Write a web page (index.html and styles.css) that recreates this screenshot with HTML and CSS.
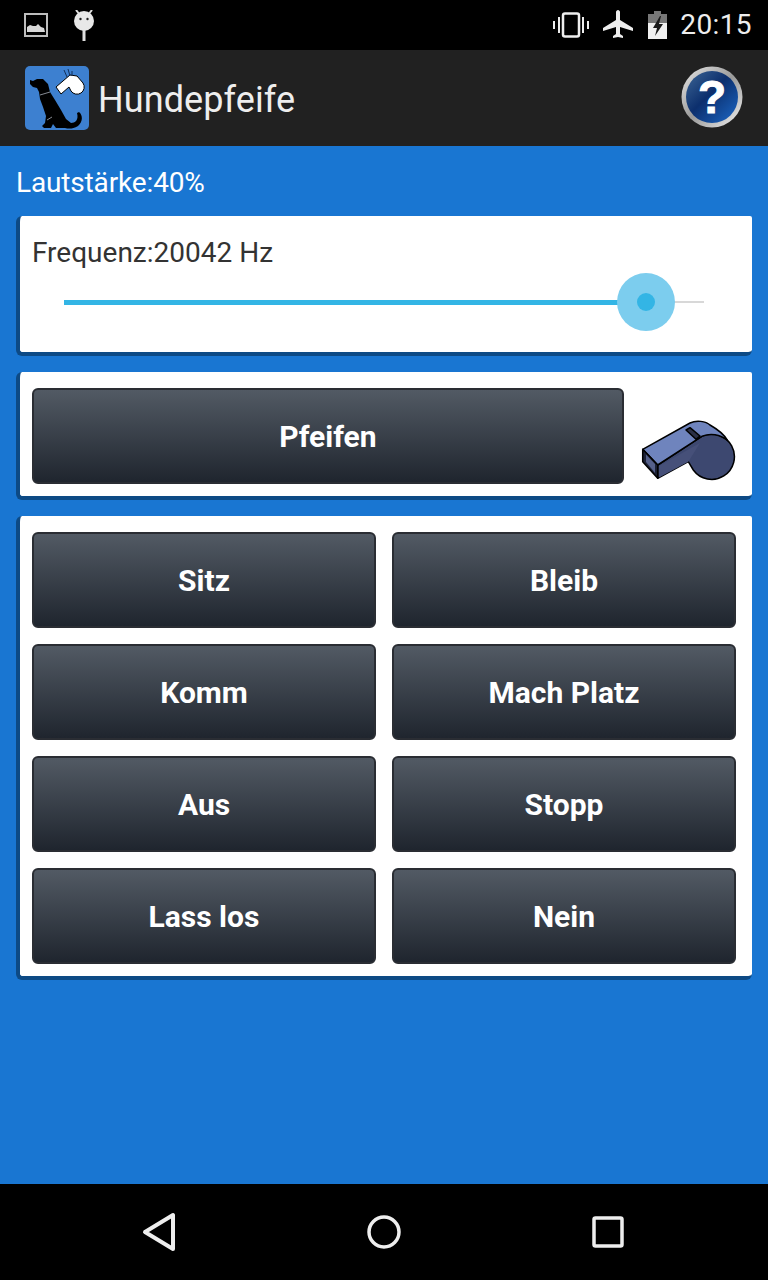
FILE: index.html
```html
<!DOCTYPE html>
<html>
	<head>
		<meta charset="UTF-8">
		<title>Hundepfeife</title>
		<link rel="stylesheet" href="styles.css">
	</head>
	<body>
		<div class="status">
			<div class="status-left">
				<svg width="24" height="24" viewBox="0 0 24 24">
					<rect x="1" y="1" width="22" height="22" fill="none" stroke="#bdbdbd" stroke-width="2"/>
					<path d="M3 19v-5l3-2 3 1 3 0 2-2 3 3 3 1 1 4z" fill="#d8d8d8"/>
				</svg>
				<svg width="22" height="32" viewBox="0 0 22 32">
					<path d="M3 0l4 5M19 0l-4 5" stroke="#e0e0e0" stroke-width="2"/>
					<circle cx="11" cy="11" r="10" fill="#e8e8e8"/>
					<circle cx="7.500" cy="9" r="1.200" fill="#222"/>
					<circle cx="14.500" cy="9" r="1.200" fill="#222"/>
					<rect x="9.500" y="20" width="3" height="11" fill="#e0e0e0"/>
				</svg>
			</div>
			<div class="status-right">
				<svg width="36" height="26" viewBox="0 0 36 26">
					<rect x="10" y="1.500" width="16" height="23" rx="2" fill="none" stroke="#eee" stroke-width="2.500"/>
					<path d="M1 9v8M6 5v16M30 5v16M35 9v8" stroke="#eee" stroke-width="2"/>
				</svg>
				<svg width="30" height="30" viewBox="0 0 30 30">
					<path d="M13 2c0-1 1-2 2-2s2 1 2 2v8l13 8v3l-13-4v7l3 2v2l-5-1-5 1v-2l3-2v-7l-13 4v-3l13-8z" fill="#eee"/>
				</svg>
				<svg width="19" height="28" viewBox="0 0 19 28">
					<path d="M6 0h7v3h6v25h-19v-25h6z" fill="#f0f0f0"/>
					<path d="M6 0h7v3h6v9h-19v-9h6z" fill="#777"/>
					<path d="M12 5l-7 12h4l-2 8 8-12h-4l2-8z" fill="#1a1a1a"/>
				</svg>
				<span class="clock">20:15</span>
			</div>
		</div>

		<div class="actionbar">
			<svg class="applogo" width="64" height="64" viewBox="0 0 64 64">
				<rect width="64" height="64" rx="5" fill="#3d80d0"/>
				<!-- dog -->
				<path d="M5 14L8 15L12 13L18 13L23 18L25 26L30 34L36 44L41 53L46 57C50 57 54 54 52 47L54 46C58 49 58 56 53 60C48 63 44 63 40 62L31 62L28 58L26 62L19 62L17 60L20 57L21 50L18 41L15 33L14 26L12 22L8 21L5 18Z" fill="#000"/>
				<path d="M15 29L25 26M22 54L27 51" stroke="#dfe8f5" stroke-width="0.600"/>
				<!-- whistle -->
				<path d="M31 21L45 9L52 10L58 17A6.500 6.500 0 1 1 46 25L44 21L36 28Z" fill="#fff" stroke="#000" stroke-width="1"/>
				<path d="M39 4L42 11M43 3L45 10M47 5V10" stroke="#12305a" stroke-width="1"/>
			</svg>
			<span class="apptitle">Hundepfeife</span>
			<svg class="help" width="62" height="62" viewBox="0 0 62 62">
				<defs>
					<linearGradient id="ring" x1="0" y1="0" x2="1" y2="1">
						<stop offset="0" stop-color="#e8e8e8"/>
						<stop offset="0.5" stop-color="#9a9a9a"/>
						<stop offset="1" stop-color="#f4f4f4"/>
					</linearGradient>
					<linearGradient id="disc" x1="0" y1="0" x2="1" y2="1">
						<stop offset="0" stop-color="#3f6796"/>
						<stop offset="0.45" stop-color="#0c2f6d"/>
						<stop offset="1" stop-color="#1c68c8"/>
					</linearGradient>
				</defs>
				<circle cx="31" cy="31" r="30.500" fill="url(#ring)"/>
				<circle cx="31" cy="31" r="26" fill="url(#disc)"/>
				<text class="help-mark" x="31" y="47">?</text>
			</svg>
		</div>

		<div class="main">
			<div class="volume">Lautstärke:40%</div>

			<div class="card freq">
				<div class="freq-label">Frequenz:20042 Hz</div>
				<div class="slider">
					<div class="slider-fill" style="width:91%">
						<span class="thumb"></span>
					</div>
				</div>
			</div>

			<div class="card whistle">
				<a class="btn btn-main">Pfeifen</a>
				<svg class="whistle-pic" width="96" height="66" viewBox="0 0 96 66" stroke="#000" stroke-width="1.500" stroke-linejoin="round">
					<path d="M17.700 49L62.200 20.100A22.700 22.700 0 1 1 53.300 54L48.300 45.700L17.700 62.300Z" fill="#3d4870"/>
					<path d="M19 50L60 27L48.300 45.700L19 61.500Z" fill="#465079" stroke="none"/>
					<path d="M2.700 33.300L50 7C56 4 66 5 70 9C77 13 84 18 87.500 24.400C80 18 70 17 62.200 20.100L17.700 49Z" fill="#6f84bd"/>
					<path d="M2.700 33.300L17.700 49V62.300L2.700 45.700Z" fill="#1d2236"/>
					<path d="M6 38.500L15 48V57L6 46Z" fill="#55608a" stroke="none"/>
					<path d="M46 14L50 11.700L60 20L56 23.300Z" fill="#2a2f45"/>
				</svg>
			</div>

			<div class="card commands">
				<a class="btn">Sitz</a>
				<a class="btn">Bleib</a>
				<a class="btn">Komm</a>
				<a class="btn">Mach Platz</a>
				<a class="btn">Aus</a>
				<a class="btn">Stopp</a>
				<a class="btn">Lass los</a>
				<a class="btn">Nein</a>
			</div>
		</div>

		<div class="navbar">
			<svg width="36" height="40" viewBox="0 0 36 40"><path d="M31 3v34l-28-17z" fill="none" stroke="#eee" stroke-width="4" stroke-linejoin="round"/></svg>
			<svg width="36" height="36" viewBox="0 0 36 36"><circle cx="18" cy="18" r="15" fill="none" stroke="#eee" stroke-width="3.500"/></svg>
			<svg width="32" height="32" viewBox="0 0 32 32"><rect x="2" y="2" width="28" height="28" rx="1.500" fill="none" stroke="#eee" stroke-width="3.500"/></svg>
		</div>
	</body>
</html>
```

FILE: styles.css
```css
*{margin:0;padding:0;box-sizing:border-box;}
body{width:768px;height:1280px;display:flex;flex-direction:column;background:#1976d2;font-family:Roboto,"Liberation Sans",sans-serif;overflow:hidden;}

.status{height:50px;background:#000;display:flex;justify-content:space-between;align-items:center;padding:0 16px 0 24px;}
.status-left{display:flex;align-items:center;gap:25px;}
.status-left svg:last-child{margin-top:2px;}
.status-right{display:flex;align-items:center;}
.status-right svg:nth-child(1){margin-right:14px;}
.status-right svg:nth-child(2){margin-right:15px;}
.status-right svg:nth-child(3){margin-right:13px;}
.clock{color:#eee;font-size:28px;line-height:50px;letter-spacing:.4px;}

.actionbar{height:96px;background:#212121;display:flex;align-items:center;padding:0 25px;}
.apptitle{color:#eee;font-size:36px;margin:4px 0 0 9px;flex:1;letter-spacing:.1px;}
.help{margin-bottom:2px;}
.help-mark{font-family:"Liberation Sans",sans-serif;font-weight:bold;font-size:46px;fill:#fff;stroke:#fff;stroke-width:1px;text-anchor:middle;}

.main{flex:1;padding:21px 16px 0;}
.volume{color:#fff;font-size:28px;line-height:32px;margin-bottom:17px;letter-spacing:-.15px;}

.card{background:#fff;border-left:4px solid #0d4a85;border-bottom:4px solid #0d4a85;border-radius:6px 2px 6px 6px;margin-bottom:16px;padding:16px 0 12px 12px;}
.freq{height:140px;padding:17px 0 0 12px;}
.freq-label{color:#333;font-size:28px;line-height:40px;}
.slider{position:relative;margin:28px 48px 0 32px;height:2px;background:#d8d8d8;}
.slider-fill{position:relative;height:5px;top:-1px;background:#33b5e5;}
.thumb{position:absolute;right:-29px;top:-27px;width:58px;height:58px;border-radius:50%;background:#7ccdee;}
.thumb:after{content:"";position:absolute;left:20px;top:20px;width:18px;height:18px;border-radius:50%;background:#33b5e5;}

.whistle{height:128px;display:flex;align-items:flex-start;}
.btn{display:flex;align-items:center;justify-content:center;height:96px;border:2px solid #2a2d33;border-radius:6px;background:linear-gradient(#525a64,#1f252e);color:#fff;font-size:30px;font-weight:bold;}
.btn-main{width:592px;}
.whistle-pic{margin:28px 0 0 16px;}

.commands{height:464px;display:grid;grid-template-columns:344px 344px;grid-auto-rows:96px;gap:16px;}

.navbar{height:96px;background:#000;display:grid;grid-template-columns:repeat(3,224px);padding:0 48px;justify-items:center;align-items:center;}
```
